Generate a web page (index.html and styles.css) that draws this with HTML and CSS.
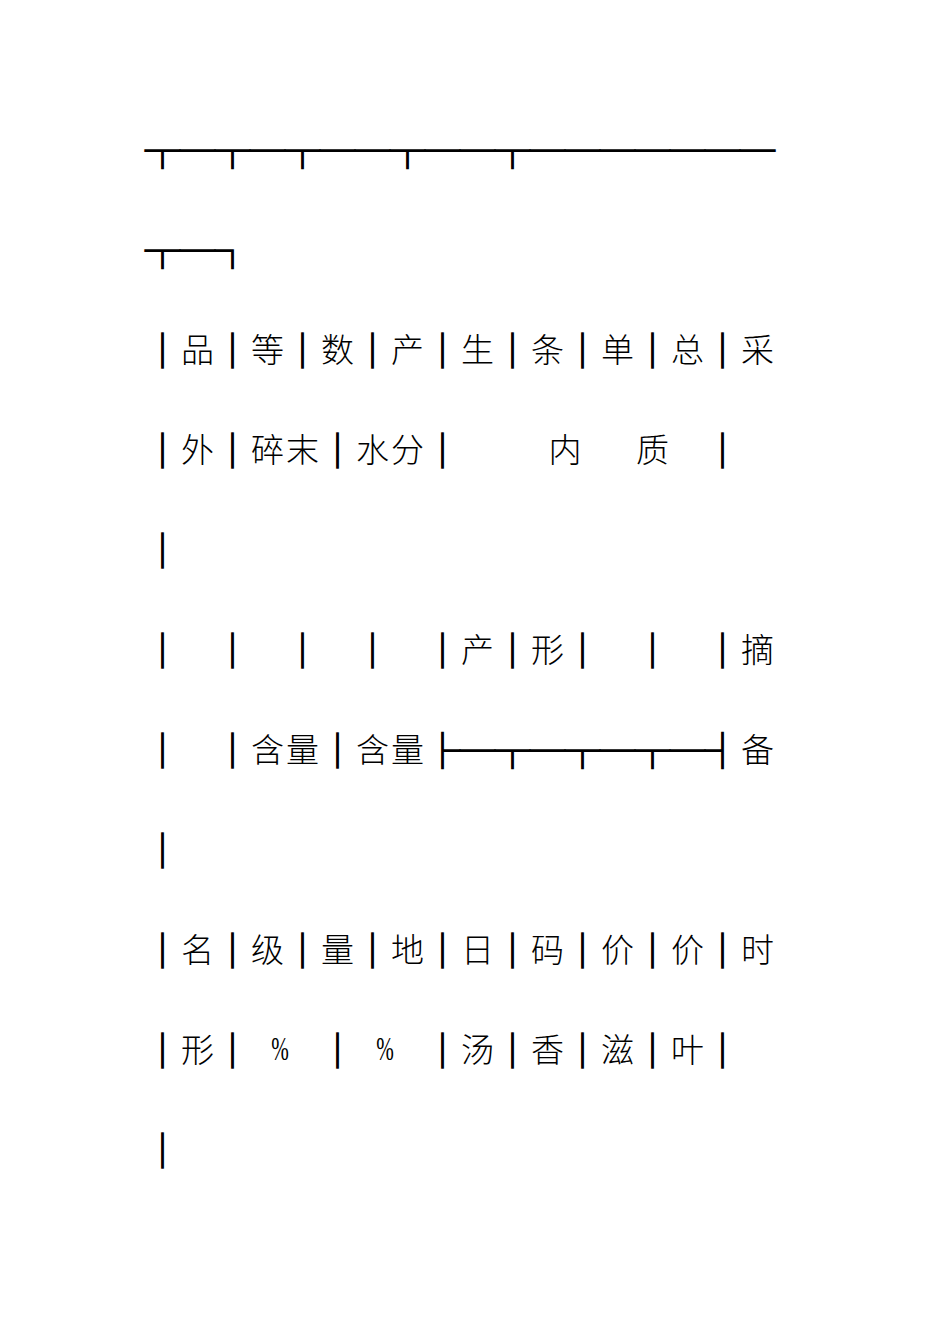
FILE: index.html
```html
<!DOCTYPE html>
<html lang="zh">
<head>
<meta charset="utf-8">
<link rel="stylesheet" href="styles.css">
</head>
<body>
<div class="page">
  <div class="row">
    <span class="c bx">┬</span><span class="c bx">─</span><span class="c bx">┬</span><span class="c bx">─</span><span class="c bx">┬</span><span class="c bx">─</span><span class="c bx">─</span><span class="c bx">┬</span><span class="c bx">─</span><span class="c bx">─</span><span class="c bx">┬</span><span class="c bx">─</span><span class="c bx">─</span><span class="c bx">─</span><span class="c bx">─</span><span class="c bx">─</span><span class="c bx">─</span><span class="c bx">─</span>
  </div>
  <div class="row">
    <span class="c bx">┬</span><span class="c bx">─</span><span class="c bx">┐</span>
  </div>
  <div class="row">
    <span class="c bx">│</span><span class="c">品</span><span class="c bx">│</span><span class="c">等</span><span class="c bx">│</span><span class="c">数</span><span class="c bx">│</span><span class="c">产</span><span class="c bx">│</span><span class="c">生</span><span class="c bx">│</span><span class="c">条</span><span class="c bx">│</span><span class="c">单</span><span class="c bx">│</span><span class="c">总</span><span class="c bx">│</span><span class="c">采</span>
  </div>
  <div class="row">
    <span class="c bx">│</span><span class="c">外</span><span class="c bx">│</span><span class="c">碎</span><span class="c">末</span><span class="c bx">│</span><span class="c">水</span><span class="c">分</span><span class="c bx">│</span><span class="h5"></span><span class="c">内</span><span class="h3"></span><span class="c">质</span><span class="c"></span><span class="c bx">│</span>
  </div>
  <div class="row">
    <span class="c bx">│</span>
  </div>
  <div class="row">
    <span class="c bx">│</span><span class="c"></span><span class="c bx">│</span><span class="c"></span><span class="c bx">│</span><span class="c"></span><span class="c bx">│</span><span class="c"></span><span class="c bx">│</span><span class="c">产</span><span class="c bx">│</span><span class="c">形</span><span class="c bx">│</span><span class="c"></span><span class="c bx">│</span><span class="c"></span><span class="c bx">│</span><span class="c">摘</span>
  </div>
  <div class="row">
    <span class="c bx">│</span><span class="c"></span><span class="c bx">│</span><span class="c">含</span><span class="c">量</span><span class="c bx">│</span><span class="c">含</span><span class="c">量</span><span class="c bx">├</span><span class="c bx">─</span><span class="c bx">┬</span><span class="c bx">─</span><span class="c bx">┬</span><span class="c bx">─</span><span class="c bx">┬</span><span class="c bx">─</span><span class="c bx">┤</span><span class="c">备</span>
  </div>
  <div class="row">
    <span class="c bx">│</span>
  </div>
  <div class="row">
    <span class="c bx">│</span><span class="c">名</span><span class="c bx">│</span><span class="c">级</span><span class="c bx">│</span><span class="c">量</span><span class="c bx">│</span><span class="c">地</span><span class="c bx">│</span><span class="c">日</span><span class="c bx">│</span><span class="c">码</span><span class="c bx">│</span><span class="c">价</span><span class="c bx">│</span><span class="c">价</span><span class="c bx">│</span><span class="c">时</span>
  </div>
  <div class="row">
    <span class="c bx">│</span><span class="c">形</span><span class="c bx">│</span><span class="h1"></span><span class="pc">%</span><span class="h2"></span><span class="c bx">│</span><span class="h1"></span><span class="pc">%</span><span class="h2"></span><span class="c bx">│</span><span class="c">汤</span><span class="c bx">│</span><span class="c">香</span><span class="c bx">│</span><span class="c">滋</span><span class="c bx">│</span><span class="c">叶</span><span class="c bx">│</span>
  </div>
  <div class="row">
    <span class="c bx">│</span>
  </div>
</div>
</body>
</html>
```

FILE: styles.css
```css
html, body {
  margin: 0;
  padding: 0;
  background: #ffffff;
}

.page {
  padding: 98px 0 0 145px;
  font-family: "Noto Sans CJK SC", "Noto Sans", sans-serif;
  font-size: 33px;
  color: #000000;
  font-weight: 300;
}

.row {
  display: flex;
  align-items: center;
  height: 100px;
  line-height: 35px;
}

.c {
  display: inline-block;
  width: 35px;
  height: 35px;
  text-align: center;
  flex: none;
  overflow: visible;
  white-space: nowrap;
}

.bx {
  font-size: 35px;
  font-weight: 700;
  display: flex;
  justify-content: center;
  align-items: center;
  -webkit-text-stroke: 1.4px #000000;
}

.h1 { width: 17.5px; flex: none; }
.h2 { width: 35px; flex: none; }
.h3 { width: 52.5px; flex: none; }
.h5 { width: 87.5px; flex: none; }

.pc {
  display: inline-block;
  width: 17.5px;
  flex: none;
  text-align: center;
  font-family: "Liberation Serif", serif;
  font-size: 34px;
  font-weight: 400;
  transform: scaleX(0.62);
}
```
